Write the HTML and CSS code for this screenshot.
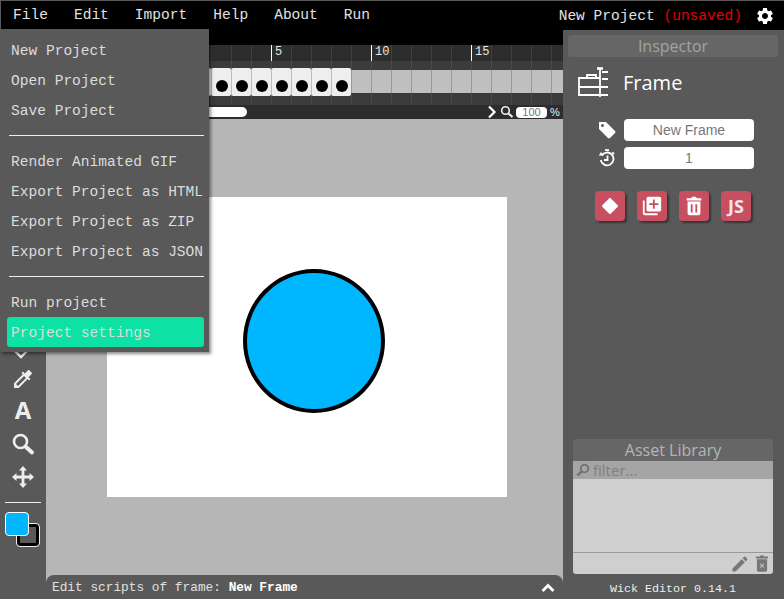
FILE: index.html
```html
<!DOCTYPE html>
<html lang="en">

<head>
    <meta charset="UTF-8">
    <title>Wick Editor</title>
    <link rel="stylesheet" href="styles.css">
</head>

<body>
    <div class="app">
        <header class="menubar">
            <nav class="menu-items">
                <a class="menu-item">File</a>
                <a class="menu-item">Edit</a>
                <a class="menu-item">Import</a>
                <a class="menu-item">Help</a>
                <a class="menu-item">About</a>
                <a class="menu-item">Run</a>
            </nav>
            <div class="project-status">
                <span>New Project <span class="unsaved">(unsaved)</span></span>
                <svg class="gear" viewBox="0 0 24 24"><path d="M19.14 12.94c.04-.3.06-.61.06-.94 0-.32-.02-.64-.07-.94l2.03-1.58c.18-.14.23-.41.12-.61l-1.92-3.32c-.12-.22-.37-.29-.59-.22l-2.39.96c-.5-.38-1.03-.7-1.62-.94l-.36-2.54c-.04-.24-.24-.41-.48-.41h-3.84c-.24 0-.43.17-.47.41l-.36 2.54c-.59.24-1.13.57-1.62.94l-2.39-.96c-.22-.08-.47 0-.59.22L2.74 8.87c-.12.21-.08.47.12.61l2.03 1.58c-.05.3-.09.63-.09.94s.02.64.07.94l-2.03 1.58c-.18.14-.23.41-.12.61l1.92 3.32c.12.22.37.29.59.22l2.39-.96c.5.38 1.03.7 1.62.94l.36 2.54c.05.24.24.41.48.41h3.84c.24 0 .44-.17.47-.41l.36-2.54c.59-.24 1.13-.56 1.62-.94l2.39.96c.22.08.47 0 .59-.22l1.92-3.32c.12-.22.07-.47-.12-.61l-2.01-1.58zM12 15.6c-1.98 0-3.6-1.62-3.6-3.6s1.62-3.6 3.6-3.6 3.6 1.62 3.6 3.6-1.62 3.6-3.6 3.6z"/></svg>
            </div>
        </header>

        <ul class="file-menu">
            <li>New Project</li>
            <li>Open Project</li>
            <li>Save Project</li>
            <li class="menu-sep"></li>
            <li>Render Animated GIF</li>
            <li>Export Project as HTML</li>
            <li>Export Project as ZIP</li>
            <li>Export Project as JSON</li>
            <li class="menu-sep"></li>
            <li>Run project</li>
            <li class="menu-active">Project settings</li>
        </ul>

        <aside class="toolbar">
            <div class="tool">
                <svg viewBox="0 0 24 24"><path d="M8 4l10 10-8 8-10-10z" fill="none" stroke="#eee" stroke-width="2.4"/></svg>
            </div>
            <div class="tool">
                <svg viewBox="0 0 24 24"><path d="M20.71 5.63l-2.34-2.34c-.39-.39-1.02-.39-1.41 0l-3.12 3.12-1.93-1.91-1.41 1.41 1.42 1.42L3 16.25V21h4.75l8.92-8.92 1.42 1.42 1.41-1.41-1.92-1.92 3.12-3.12c.4-.4.4-1.03.01-1.42zM6.92 19L5 17.08l8.06-8.06 1.92 1.92L6.92 19z"/></svg>
            </div>
            <div class="tool tool-text">A</div>
            <div class="tool">
                <svg viewBox="0 0 24 24"><circle cx="9.500" cy="9.500" r="6.500" fill="none" stroke="#eee" stroke-width="2.600"/><path d="M14.500 14.500l6.500 6" stroke="#eee" stroke-width="4" stroke-linecap="round"/></svg>
            </div>
            <div class="tool">
                <svg viewBox="0 0 24 24"><path d="M12 1l4 4.500h-2.600v5.100h5.100V8l4.500 4-4.500 4v-2.600h-5.100v5.100H16L12 23l-4-4.500h2.600v-5.100H5.500V16L1 12l4.500-4v2.600h5.100V5.500H8z"/></svg>
            </div>
            <hr class="tool-sep">
            <div class="swatches">
                <div class="swatch-stroke"></div>
                <div class="swatch-fill"></div>
            </div>
        </aside>

        <main class="center">
            <section class="timeline">
                <div class="timeline-tabs"></div>
                <div class="ruler">
                    <span class="ruler-mark">5</span>
                    <span class="ruler-mark">10</span>
                    <span class="ruler-mark">15</span>
                </div>
                <div class="layer-row">
                    <div class="frame-strip">
                        <div class="frame"><i></i></div>
                        <div class="frame"><i></i></div>
                        <div class="frame"><i></i></div>
                        <div class="frame"><i></i></div>
                        <div class="frame"><i></i></div>
                        <div class="frame"><i></i></div>
                        <div class="frame"><i></i></div>
                        <div class="frame"><i></i></div>
                    </div>
                </div>
                <div class="timeline-bar">
                    <div class="scroll-track"><div class="scroll-thumb"></div></div>
                    <svg class="chevron" viewBox="0 0 10 14"><path d="M2 1.500L7.500 7 2 12.500" fill="none" stroke="#fff" stroke-width="2.200"/></svg>
                    <svg class="zoom-icon" viewBox="0 0 14 14"><circle cx="5.500" cy="5.500" r="3.800" fill="none" stroke="#eee" stroke-width="1.600"/><path d="M8.500 8.500l4 3.500" stroke="#eee" stroke-width="2.200"/></svg>
                    <span class="zoom-value">100</span>
                    <span class="zoom-unit">%</span>
                </div>
            </section>

            <section class="canvas">
                <div class="stage">
                    <div class="circle"></div>
                </div>
            </section>

            <footer class="script-bar">
                <span>Edit scripts of frame: <b>New Frame</b></span>
                <svg class="script-toggle" viewBox="0 0 14 10"><path d="M1.500 8L7 2.500 12.500 8" fill="none" stroke="#fff" stroke-width="2.800"/></svg>
            </footer>
        </main>

        <aside class="sidebar">
            <h2 class="panel-title">Inspector</h2>
            <div class="selection">
                <svg class="frame-icon" viewBox="0 0 30 30" fill="none" stroke="#fff" stroke-width="1.800">
                    <path d="M1 11h21M1 20h29M1 28h29M1 10v19M24 5h6M24 12h6"/>
                    <path d="M22 1v29"/>
                    <path d="M19 1.500h6" stroke-width="2.600"/>
                    <path d="M9 11V8h9v3"/>
                </svg>
                <span>Frame</span>
            </div>
            <div class="field">
                <svg class="field-icon" viewBox="0 0 18 18"><path fill-rule="evenodd" d="M1 1h7l9 9c.6.6.6 1.400 0 2l-5 5c-.6.6-1.400.6-2 0L1 8zM4.500 3A1.500 1.500 0 1 0 4.500 6 1.500 1.500 0 0 0 4.500 3z"/></svg>
                <div class="field-input">New Frame</div>
            </div>
            <div class="field">
                <svg class="field-icon" viewBox="0 0 18 18"><g fill="none" stroke="#fff" stroke-width="1.800"><path d="M3.700 6.500A6.400 6.400 0 1 1 2.800 11"/><path d="M7 1.200h4M14.300 3.300l1.700 1.700"/><path d="M9.500 6.500V11H6"/></g><path d="M.8 6.500h5L3 3z"/></svg>
                <div class="field-input">1</div>
            </div>
            <div class="actions">
                <div class="action"><span class="diamond"></span></div>
                <div class="action"><svg viewBox="0 0 24 24"><path d="M4 6H2v14c0 1.100.9 2 2 2h14v-2H4V6zm16-4H8c-1.100 0-2 .9-2 2v12c0 1.100.9 2 2 2h12c1.100 0 2-.9 2-2V4c0-1.100-.9-2-2-2zm-1 9h-4v4h-2v-4H9V9h4V5h2v4h4v2z"/></svg></div>
                <div class="action"><svg viewBox="0 0 24 24"><path fill-rule="evenodd" d="M5 7h14v13c0 1.100-.9 2-2 2H7c-1.100 0-2-.9-2-2zM8.500 10v9h2v-9zM13.500 10v9h2v-9zM4 3.500h5L10 2h4l1 1.500h5V6H4z"/></svg></div>
                <div class="action action-js">JS</div>
            </div>

            <section class="assets">
                <h2 class="panel-title assets-title">Asset Library</h2>
                <div class="asset-filter">
                    <svg viewBox="0 0 14 14"><circle cx="8.500" cy="5.500" r="3.800" fill="none" stroke="#707070" stroke-width="1.800"/><path d="M5.500 8.500L1.500 12.500" stroke="#707070" stroke-width="2.400"/></svg>
                    <span>filter...</span>
                </div>
                <div class="asset-list"></div>
                <div class="asset-actions">
                    <svg class="asset-edit" viewBox="0 0 24 24"><path d="M3 17.250V21h3.750L17.810 9.940l-3.750-3.750L3 17.250zM20.710 7.040c.39-.39.39-1.020 0-1.410l-2.340-2.340c-.39-.39-1.020-.39-1.410 0l-1.830 1.830 3.750 3.750 1.830-1.830z"/></svg>
                    <svg class="asset-delete" viewBox="0 0 16 20"><path fill-rule="evenodd" d="M2 5h12v13c0 1-.6 1.600-1.600 1.600H3.600C2.600 19.600 2 19 2 18zM6.200 10l-.7.700L7.300 12.500 5.500 14.300l.7.700L8 13.200 9.800 15l.7-.7L8.700 12.500l1.800-1.800-.7-.7L8 11.800zM1 1.800h4.500L6 .6h4l.5 1.200H15V4H1z"/></svg>
                </div>
            </section>
            <div class="version">Wick Editor 0.14.1</div>
        </aside>
    </div>
</body>

</html>
```

FILE: styles.css
```css
* {
    box-sizing: border-box;
}

body {
    margin: 0;
    background: #595959;
    font-family: "Liberation Mono", monospace;
    overflow: hidden;
}

.app {
    position: relative;
    display: grid;
    grid-template-columns: 46px 1fr 221px;
    grid-template-rows: 30px 1fr;
    width: 784px;
    height: 599px;
}

/* menu bar */
.menubar {
    grid-column: 1 / -1;
    display: flex;
    justify-content: space-between;
    align-items: center;
    margin: 1px 0 0 1px;
    background: #000;
    color: #e0e0e0;
    font-size: 14.55px;
}

.menu-items {
    display: flex;
    margin-left: -1px;
}

.menu-item {
    padding: 0 13px 1px;
}

.project-status {
    display: flex;
    align-items: center;
    gap: 13px;
    padding-right: 9px;
}

.unsaved {
    color: #e60000;
}

.gear {
    width: 20px;
    height: 20px;
    fill: #fff;
}

/* file menu */
.file-menu {
    position: absolute;
    top: 29px;
    left: 0;
    z-index: 5;
    width: 209px;
    height: 323px;
    margin: 0;
    padding: 6px 5px 0 7px;
    list-style: none;
    background: #595959;
    color: #dcdcdc;
    font-size: 14.55px;
    box-shadow: 2px 2px 3px rgba(0, 0, 0, 0.45);
}

.file-menu li {
    height: 30px;
    padding: 0 4px;
    line-height: 33px;
    white-space: nowrap;
}

.file-menu .menu-sep {
    height: 1px;
    margin: 10px 0 10px 2px;
    padding: 0;
    background: #eee;
}

.file-menu .menu-active {
    border-radius: 3px;
    background: #0de2a4;
}

/* left tools */
.toolbar {
    display: flex;
    flex-direction: column;
    justify-content: flex-end;
    align-items: center;
    padding-bottom: 52px;
    background: #595959;
}

.tool {
    display: flex;
    justify-content: center;
    align-items: center;
    width: 46px;
    height: 32.5px;
}

.tool svg {
    width: 24px;
    height: 24px;
    fill: #eee;
}

.tool-text {
    padding-bottom: 4px;
    color: #eee;
    font-family: "Open Sans", sans-serif;
    font-size: 24px;
    font-weight: 700;
}

.tool-sep {
    width: 36px;
    margin: 9px 0;
    border: 0;
    border-top: 1px solid #eee;
}

.swatches {
    position: relative;
    width: 36px;
    height: 35px;
}

.swatch-fill {
    position: absolute;
    top: 0;
    left: 0;
    width: 24px;
    height: 24px;
    border: 1px solid #fff;
    border-radius: 4px;
    background: #00b7ff;
}

.swatch-stroke {
    position: absolute;
    top: 11px;
    left: 11px;
    width: 24px;
    height: 24px;
    border: 1px solid #eee;
    border-radius: 4px;
    background: #595959;
    box-shadow: inset 0 0 0 3px #000;
}

/* center column */
.center {
    display: flex;
    flex-direction: column;
    min-width: 0;
    background: #b6b6b6;
}

.timeline {
    background: #000;
}

.timeline-tabs {
    height: 15px;
}

.ruler {
    display: flex;
    height: 16px;
    padding-left: 225px;
    background: repeating-linear-gradient(90deg, #3f3f3f 0 1px, #2d2d2d 1px 20px) 5px 0;
    color: #e6e6e6;
    font-size: 12px;
}

.ruler-mark {
    flex: none;
    width: 100px;
    padding-left: 3px;
    border-left: 1px solid #fff;
    line-height: 15px;
}

.layer-row {
    height: 44px;
    padding: 7px 0 9px 145px;
    background:
        repeating-linear-gradient(90deg, #999 0 1px, #c0c0c0 1px 20px) 5px 9px / 100% 23px no-repeat,
        repeating-linear-gradient(90deg, #4a4a4a 0 1px, #3b3b3b 1px 20px) 5px 0;
}

.frame-strip {
    display: flex;
    height: 28px;
}

.frame {
    display: flex;
    justify-content: center;
    align-items: flex-end;
    width: 20px;
    padding-bottom: 4px;
    border-left: 1px solid #bbb;
    border-radius: 2px;
    background: #eee;
}

.frame i {
    width: 12px;
    height: 12px;
    border-radius: 50%;
    background: #000;
}

.timeline-bar {
    display: flex;
    align-items: center;
    height: 14px;
    background: #2d2d2d;
    color: #eee;
}

.scroll-track {
    flex: 1;
    padding-left: 100px;
}

.scroll-thumb {
    width: 101px;
    height: 10px;
    border-radius: 5px;
    background: #fff;
}

.chevron {
    width: 10px;
    height: 14px;
    margin-right: 3px;
    margin-left: 1px;
}

.zoom-icon {
    width: 14px;
    height: 14px;
}

.zoom-value {
    width: 31px;
    height: 11px;
    margin-left: 2px;
    border-radius: 4px;
    background: #fff;
    color: #777;
    font: 11px/11px "Liberation Sans", sans-serif;
    text-align: center;
}

.zoom-unit {
    width: 16px;
    padding-left: 3px;
    font: 11px "Liberation Sans", sans-serif;
}

.canvas {
    flex: 1;
    display: flex;
    justify-content: center;
    align-items: center;
    padding: 0 0 1px 5px;
    background: #b6b6b6;
}

.stage {
    position: relative;
    width: 400px;
    height: 300px;
    background: #fff;
}

.circle {
    position: absolute;
    top: 72px;
    left: 136px;
    width: 142px;
    height: 144px;
    border: 4px solid #000;
    border-radius: 50%;
    background: #00b7ff;
}

.script-bar {
    display: flex;
    justify-content: space-between;
    align-items: center;
    height: 24px;
    margin-top: -1px;
    padding: 1px 8px 0 6px;
    border-radius: 8px 8px 0 0;
    background: #595959;
    color: #e0e0e0;
    font-size: 12.8px;
    position: relative;
}

.script-bar b {
    color: #fff;
}

.script-toggle {
    width: 14px;
    height: 10px;
}

/* right panel */
.sidebar {
    display: flex;
    flex-direction: column;
    padding: 5px 6px 0 5px;
    background: #595959;
    color: #fff;
    font-family: "Open Sans", sans-serif;
}

.panel-title {
    height: 22px;
    margin: 0;
    border-radius: 3px;
    background: #666;
    color: #a3a3a3;
    font-size: 16px;
    font-weight: 400;
    line-height: 22px;
    text-align: center;
}

.selection {
    display: flex;
    align-items: center;
    gap: 15px;
    height: 30px;
    margin: 10px 0 22px 10px;
    font-size: 20px;
}

.frame-icon {
    width: 30px;
    height: 30px;
}

.field {
    display: flex;
    align-items: center;
    gap: 8px;
    margin: 0 0 6px 30px;
}

.field-icon {
    width: 18px;
    height: 18px;
    fill: #fff;
}

.field-input {
    width: 130px;
    height: 22px;
    border-radius: 4px;
    background: #fff;
    color: #777;
    font: 14px/22px "Liberation Sans", sans-serif;
    text-align: center;
}

.actions {
    display: flex;
    gap: 12px;
    margin: 16px 0 0 27px;
}

.action {
    display: flex;
    justify-content: center;
    align-items: center;
    width: 30px;
    height: 30px;
    border-radius: 4px;
    background: #c74f60;
    box-shadow: 2px 2px 2px rgba(0, 0, 0, 0.4);
}

.action svg {
    width: 22px;
    height: 22px;
    fill: #fff;
}

.diamond {
    width: 12px;
    height: 12px;
    border-radius: 1px;
    background: #fff;
    transform: rotate(45deg);
}

.action-js {
    color: #f5e5e8;
    font-size: 18px;
    font-weight: 700;
}

.assets {
    display: flex;
    flex-direction: column;
    width: 200px;
    height: 135px;
    margin: 218px 0 0 5px;
}

.assets-title {
    border-radius: 3px 3px 0 0;
    color: #b5b5b5;
}

.asset-filter {
    display: flex;
    align-items: center;
    gap: 3px;
    height: 18px;
    padding-left: 3px;
    background: #a5a5a5;
    color: #808080;
    font-size: 15px;
}

.asset-filter svg {
    width: 14px;
    height: 14px;
}

.asset-list {
    flex: 1;
    border-bottom: 1px solid #999;
    background: #cfcfcf;
}

.asset-actions {
    display: flex;
    justify-content: flex-end;
    align-items: center;
    gap: 5px;
    height: 21px;
    padding-right: 4px;
    border-radius: 0 0 3px 3px;
    background: #cfcfcf;
}

.asset-actions svg {
    fill: #777;
}

.asset-edit {
    width: 20px;
    height: 20px;
}

.asset-delete {
    width: 14px;
    height: 17px;
}

.version {
    margin-top: 8px;
    color: #eee;
    font-family: "Liberation Mono", monospace;
    font-size: 11.7px;
    text-align: center;
}
```
